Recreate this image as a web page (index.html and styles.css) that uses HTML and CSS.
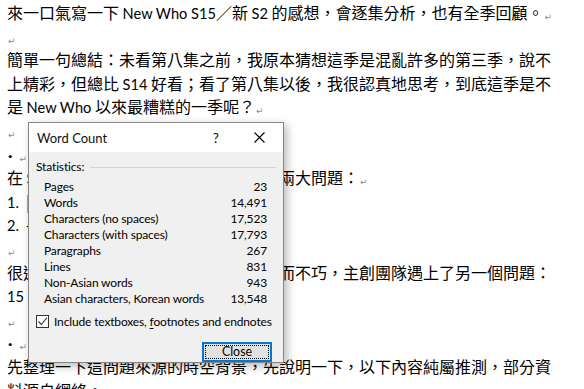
FILE: index.html
```html
<!DOCTYPE html>
<html lang="zh-Hant">
<head>
    <meta charset="UTF-8">
    <title>Word Count</title>
    <link rel="stylesheet" href="styles.css">
</head>
<body>

    <div class="doc">
        <div class="ln">來一口氣寫一下 <span class="lat">New Who S15</span>／新 <span class="lat">S2</span> 的感想，會逐集分析，也有全季回顧。<span class="pm">↵</span></div>
        <div class="ln"><span class="pm">↵</span></div>
        <div class="ln">簡單一句總結：未看第八集之前，我原本猜想這季是混亂許多的第三季，說不</div>
        <div class="ln">上精彩，但總比 <span class="lat">S14</span> 好看；看了第八集以後，我很認真地思考，到底這季是不</div>
        <div class="ln">是 <span class="lat">New Who</span> 以來最糟糕的一季呢？<span class="pm">↵</span></div>
        <div class="ln"><span class="pm">↵</span></div>
        <div class="ln"><span class="dot">·</span><span class="pm">↵</span></div>
        <div class="ln">在 <span class="lat">S15</span> 開播之前，主創團隊其實已面臨兩大問題：<span class="pm">↵</span></div>
        <div class="ln"><span class="lat">1.</span>&nbsp;&nbsp;| 原班人馬的續約問題</div>
        <div class="ln"><span class="lat">2.</span>&nbsp;&nbsp;- 製作時程的安排</div>
        <div class="ln"><span class="pm">↵</span></div>
        <div class="ln">很遺憾，新一季拍攝過程總是一波三折而不巧，主創團隊遇上了另一個問題：</div>
        <div class="ln"><span class="lat">15</span> 週的拍攝期</div>
        <div class="ln"><span class="pm">↵</span></div>
        <div class="ln"><span class="dot">·</span><span class="pm">↵</span></div>
        <div class="ln">先整理一下這問題來源的時空背景，先說明一下，以下內容純屬推測，部分資</div>
        <div class="ln">料源自網絡。</div>
    </div>

    <div class="dlg">
        <div class="dlg-title">
            <span class="dlg-name">Word Count</span>
            <span class="dlg-help">?</span>
            <svg class="dlg-x" width="11" height="11" viewBox="0 0 11 11">
                <path d="M0.5 0.5 L10.5 10.5 M10.5 0.5 L0.5 10.5" stroke="#000" stroke-width="1.1" fill="none"/>
            </svg>
        </div>
        <div class="dlg-body">
            <div class="group">
                <span>Statistics:</span>
                <span class="rule"></span>
            </div>
            <div class="stats">
                <div class="row"><span>Pages</span><span>23</span></div>
                <div class="row"><span>Words</span><span>14,491</span></div>
                <div class="row"><span>Characters (no spaces)</span><span>17,523</span></div>
                <div class="row"><span>Characters (with spaces)</span><span>17,793</span></div>
                <div class="row"><span>Paragraphs</span><span>267</span></div>
                <div class="row"><span>Lines</span><span>831</span></div>
                <div class="row"><span>Non-Asian words</span><span>943</span></div>
                <div class="row"><span>Asian characters, Korean words</span><span>13,548</span></div>
            </div>
            <div class="check">
                <span class="box">
                    <svg width="11" height="11" viewBox="0 0 11 11">
                        <path d="M1.5 5.5 L4.3 8.5 L9.8 1.8" stroke="#333" stroke-width="1.1" fill="none"/>
                    </svg>
                </span>
                <span class="check-label">Include textboxes, <u>f</u>ootnotes and endnotes</span>
            </div>
            <div class="actions">
                <button class="close-btn"><span class="focus">Close</span></button>
            </div>
        </div>
    </div>

</body>
</html>
```

FILE: styles.css
```css
* { box-sizing: border-box; }
body { margin: 0; padding: 0; background: #fff; overflow: hidden; }

.doc { padding: 1px 0 0 7px; font-family: "Noto Sans CJK TC", sans-serif; font-size: 16px; color: #000; }
.ln { height: 23.6px; line-height: 23.6px; white-space: nowrap; }
.lat { font-family: Lato, sans-serif; font-size: 14.6px; }
.dot { font-family: Lato, sans-serif; font-weight: bold; font-size: 16px; margin: 0 6px 0 1px; }
.pm { font-family: "DejaVu Sans", sans-serif; font-size: 9px; color: #8a8a8a; vertical-align: -1px; margin-left: 1px; }

.dlg { position: absolute; left: 28px; top: 122px; width: 256px; height: 241px; border: 1px solid #858585; background: #f0f0f0; box-shadow: 3px 3px 9px rgba(0, 0, 0, 0.28); font-family: Lato, sans-serif; font-size: 12px; letter-spacing: -0.15px; color: #000; }
.dlg-title { height: 29px; background: #fff; display: flex; align-items: center; padding: 0 0 0 8px; letter-spacing: 0; }
.dlg-name { font-size: 13px; flex: 1; color: #111; }
.dlg-help { width: 12px; margin-right: 29px; font-size: 13px; }
.dlg-x { margin-right: 18px; }

.dlg-body { padding: 7px 16px 0 7px; }
.group { display: flex; align-items: center; height: 16px; line-height: 16px; }
.rule { flex: 1; height: 1px; background: #d4d4d4; margin: 1px -9px 0 6px; }
.stats { margin-top: 4px; padding-left: 8px; }
.row { display: flex; justify-content: space-between; height: 16px; line-height: 16px; }

.check { display: flex; align-items: center; height: 16px; margin-top: 6px; white-space: nowrap; }
.box { width: 13px; height: 13px; border: 1px solid #333; background: #fff; display: flex; align-items: center; justify-content: center; margin-right: 5px; }
.check u { text-decoration-thickness: 1px; text-underline-offset: 2px; }

.actions { display: flex; justify-content: flex-end; margin-top: 13px; margin-right: -5px; }
.close-btn { width: 70px; height: 20px; padding: 1px; border: 2px solid #0078d7; background: #e1e1e1; font-family: Lato, sans-serif; font-size: 12.4px; color: #000; }
.focus { display: block; height: 14px; line-height: 12px; border: 1px dotted #000; }
```
